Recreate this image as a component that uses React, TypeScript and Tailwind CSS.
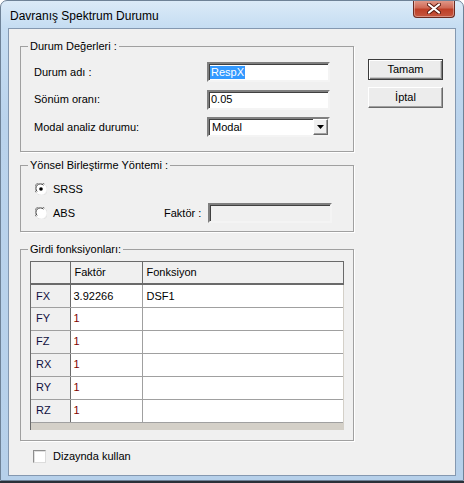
import React from "react";

const sunken =
  "border-2 border-t-[#7f7f7f] border-l-[#7f7f7f] border-b-[#f4f4f4] border-r-[#f4f4f4] shadow-[inset_1px_1px_0_#404040]";

function Group({
  title,
  className,
  children,
}: {
  title: string;
  className?: string;
  children: React.ReactNode;
}) {
  return (
    <fieldset
      className={`border border-[#a0a0a0] shadow-[1px_1px_0_#ffffff] ${className ?? ""}`}
    >
      <legend className="ml-[7px] px-[2px] leading-[13px]">{title}</legend>
      {children}
    </fieldset>
  );
}

function FieldRow({
  label,
  children,
}: {
  label: string;
  children: React.ReactNode;
}) {
  return (
    <div className="flex items-center h-[20px]">
      <span className="w-[173px]">{label}</span>
      {children}
    </div>
  );
}

function Radio({ checked }: { checked?: boolean }) {
  return (
    <svg width="12" height="12" viewBox="0 0 12 12" className="shrink-0">
      <circle cx="6" cy="6" r="5.5" fill="#ffffff" />
      <path d="M1.2 9.5 A5.5 5.5 0 0 1 9.5 1.2" stroke="#808080" fill="none" strokeWidth="1" />
      <path d="M2.2 8.5 A4.3 4.3 0 0 1 8.5 2.2" stroke="#404040" fill="none" strokeWidth="1" />
      <path d="M10.8 2.5 A5.5 5.5 0 0 1 2.5 10.8" stroke="#e3e3e3" fill="none" strokeWidth="1" />
      {checked && <circle cx="6" cy="6" r="1.8" fill="#000000" />}
    </svg>
  );
}

const rows = [
  { name: "FX", factor: "3.92266", fn: "DSF1", red: false },
  { name: "FY", factor: "1", fn: "", red: true },
  { name: "FZ", factor: "1", fn: "", red: true },
  { name: "RX", factor: "1", fn: "", red: true },
  { name: "RY", factor: "1", fn: "", red: true },
  { name: "RZ", factor: "1", fn: "", red: true },
];

export default function App() {
  return (
    <div className="w-[464px] h-[483px] bg-white flex flex-col font-['Liberation_Sans',Arial,sans-serif] text-[11px] text-black">
      {/* window frame */}
      <div className="h-[481px] rounded-t-[7px] border border-[#6e8297] bg-[linear-gradient(180deg,#dbeaf8_0px,#c6ddf2_26px,#bad3ec_120px,#b6d0ea_100%)] flex flex-col px-[7px] pb-[4px] overflow-hidden">
        {/* title bar */}
        <div className="h-[27px] flex items-start">
          <span className="text-[12px] pt-[6px] pl-[2px] text-black">
            Davranış Spektrum Durumu
          </span>
          <div className="ml-auto -mt-px mr-[1px] w-[42px] h-[18px] rounded-b-[4px] border border-[#6b2a20] border-t-0 bg-[linear-gradient(180deg,#e29d8e_0%,#d06a56_45%,#be3f27_55%,#c5563f_100%)] flex items-center justify-center shadow-[inset_0_0_0_1px_rgba(255,255,255,0.35)]">
            <svg width="14" height="11" viewBox="0 0 14 11">
              <path d="M2 1.5 L12 9.5 M12 1.5 L2 9.5" stroke="#5a1a10" strokeWidth="4" strokeLinecap="round" />
              <path d="M2 1.5 L12 9.5 M12 1.5 L2 9.5" stroke="#ffffff" strokeWidth="2.2" strokeLinecap="round" />
            </svg>
          </div>
        </div>

        {/* client area */}
        <div className="flex-1 border border-[#8498b0] bg-[#f0f0f0] flex pl-[11px] pt-[11px]">
          <div className="w-[334px] flex flex-col">
            <Group title="Durum Değerleri :" className="h-[112px]">
              <div className="flex flex-col gap-[7.5px] pl-[13px] pt-[9px]">
                <FieldRow label="Durum adı :">
                  <div className={`w-[123px] h-[20px] bg-white flex items-center pl-[1px] ${sunken}`}>
                    <span className="bg-[#3399ff] text-white px-[1px] leading-[13px]">RespX</span>
                  </div>
                </FieldRow>
                <FieldRow label="Sönüm oranı:">
                  <div className={`w-[123px] h-[20px] bg-white flex items-center pl-[2px] ${sunken}`}>
                    0.05
                  </div>
                </FieldRow>
                <FieldRow label="Modal analiz durumu:">
                  <div className={`w-[123px] h-[20px] bg-white flex items-center pl-[3px] ${sunken}`}>
                    <span className="flex-1">Modal</span>
                    <div className="w-[15px] h-[16px] bg-[#f0f0f0] border border-t-white border-l-white border-b-[#696969] border-r-[#696969] shadow-[inset_-1px_-1px_0_#a0a0a0] flex items-center justify-center">
                      <svg width="7" height="4" viewBox="0 0 7 4">
                        <path d="M0 0 H7 L3.5 4 Z" fill="#000000" />
                      </svg>
                    </div>
                  </div>
                </FieldRow>
              </div>
            </Group>

            <Group title="Yönsel Birleştirme Yöntemi :" className="mt-[7px] h-[73px]">
              <div className="flex flex-col gap-[4px] pl-[14px] pt-[7px]">
                <div className="flex items-center h-[20px] gap-[6px]">
                  <Radio checked />
                  <span>SRSS</span>
                </div>
                <div className="flex items-center h-[20px]">
                  <Radio />
                  <span className="ml-[6px] w-[111px]">ABS</span>
                  <span className="w-[44px]">Faktör :</span>
                  <div className={`w-[124px] h-[20px] bg-[#f0f0f0] ${sunken}`} />
                </div>
              </div>
            </Group>

            <Group title="Girdi fonksiyonları:" className="mt-[11px] h-[198px]">
              <div className="pl-[9px] pt-[5px]">
                <div className="w-[314px] h-[169px] bg-[#d4d0c8] border-t border-l border-[#6a6a6a]">
                  <table className="border-collapse table-fixed w-[312px]">
                    <colgroup>
                      <col className="w-[39px]" />
                      <col className="w-[72px]" />
                      <col className="w-[201px]" />
                    </colgroup>
                    <thead>
                      <tr className="h-[22px] bg-[#f0f0f0]">
                        <th className="border-r border-b-2 border-[#6a6a6a] p-0" />
                        <th className="border-r border-b-2 border-[#6a6a6a] text-left font-normal pl-[4px] p-0">
                          Faktör
                        </th>
                        <th className="border-r border-b-2 border-[#6a6a6a] text-left font-normal pl-[4px] p-0">
                          Fonksiyon
                        </th>
                      </tr>
                    </thead>
                    <tbody>
                      {rows.map((r) => (
                        <tr key={r.name} className="h-[23px]">
                          <td className="bg-[#f0f0f0] border-r border-r-[#6a6a6a] border-b border-b-[#a0a0a0] pl-[5px] p-0 text-[#101040]">
                            {r.name}
                          </td>
                          <td
                            className={`bg-white border-r border-b border-[#a0a0a0] pl-[3px] p-0 ${
                              r.red ? "text-[#800000]" : "text-black"
                            }`}
                          >
                            {r.factor}
                          </td>
                          <td className="bg-white border-b border-[#a0a0a0] pl-[4px] p-0">
                            {r.fn}
                          </td>
                        </tr>
                      ))}
                    </tbody>
                  </table>
                </div>
              </div>
            </Group>

            <div className="flex items-center mt-[9px] pl-[13px] h-[13px] gap-[7px]">
              <div className="w-[13px] h-[13px] bg-white border border-t-[#8e8e8e] border-l-[#8e8e8e] border-b-[#dcdcdc] border-r-[#dcdcdc] shadow-[inset_1px_1px_0_#e0e0e0]" />
              <span>Dizaynda kullan</span>
            </div>
          </div>

          {/* buttons */}
          <div className="ml-[14px] pt-[19px] flex flex-col gap-[7px]">
            <button className="w-[75px] h-[21px] bg-[#ececec] border border-[#3c3c3c] shadow-[inset_1px_1px_0_#ffffff,inset_-1px_-1px_0_#808080,inset_-2px_-2px_0_#c8c8c8] text-[11px] font-normal">
              Tamam
            </button>
            <button className="w-[75px] h-[21px] bg-[#ececec] border border-t-white border-l-white border-b-[#696969] border-r-[#696969] shadow-[inset_-1px_-1px_0_#a0a0a0] text-[11px] font-normal">
              İptal
            </button>
          </div>
        </div>
      </div>
      <div className="h-[2px] bg-[#2a3038]" />
    </div>
  );
}
